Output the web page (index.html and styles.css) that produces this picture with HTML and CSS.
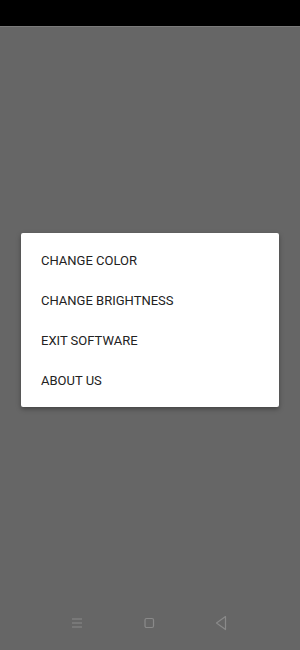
FILE: index.html
```html
<!DOCTYPE html>
<html lang="en">
<head>
    <meta charset="UTF-8">
    <meta name="viewport" content="width=device-width, initial-scale=1.0">
    <title>Menu</title>
    <link rel="stylesheet" href="styles.css">
</head>
<body>

    <div class="status-bar"></div>

    <div class="screen">
        <div class="menu">
            <div class="menu-item">CHANGE COLOR</div>
            <div class="menu-item">CHANGE BRIGHTNESS</div>
            <div class="menu-item">EXIT SOFTWARE</div>
            <div class="menu-item">ABOUT US</div>
        </div>
    </div>

    <div class="nav-bar">
        <svg class="nav-icon" width="12" height="14" viewBox="0 0 12 14">
            <path d="M1 3h10M1 7h10M1 11h10" stroke="#8a8a8a" stroke-width="1.2" fill="none"/>
        </svg>
        <svg class="nav-icon" width="12" height="14" viewBox="0 0 12 14">
            <rect x="2" y="2.5" width="8.5" height="9" rx="1.5" stroke="#8a8a8a" stroke-width="1.2" fill="none"/>
        </svg>
        <svg class="nav-icon" width="12" height="16" viewBox="0 0 12 16">
            <path d="M10.5 1.5L1.5 8l9 6.5z" stroke="#8a8a8a" stroke-width="1.2" stroke-linejoin="round" fill="none"/>
        </svg>
    </div>

</body>
</html>
```

FILE: styles.css
```css
/* Dialog menu over a dimmed screen */
body {
    margin: 0;
    height: 650px;
    display: flex;
    flex-direction: column;
    background: #666666;
    font-family: Roboto, "Noto Sans", sans-serif;
}

.status-bar {
    height: 26px;
    background: #000;
    border-bottom: 1px solid #7a7a7a;
}

.screen {
    flex: 1;
    display: flex;
    flex-direction: column;
    align-items: center;
}

.menu {
    width: 258px;
    margin-top: 206px;
    padding: 8px 0 6px;
    background: #fff;
    border-radius: 2px;
    box-shadow: 0 2px 5px rgba(0, 0, 0, 0.35);
}

.menu-item {
    height: 40px;
    line-height: 40px;
    padding: 0 20px;
    font-size: 13px;
    color: #222;
}

.nav-bar {
    height: 46px;
    display: flex;
    align-items: center;
    justify-content: space-between;
    padding: 0 73px 4px 71px;
}
```
